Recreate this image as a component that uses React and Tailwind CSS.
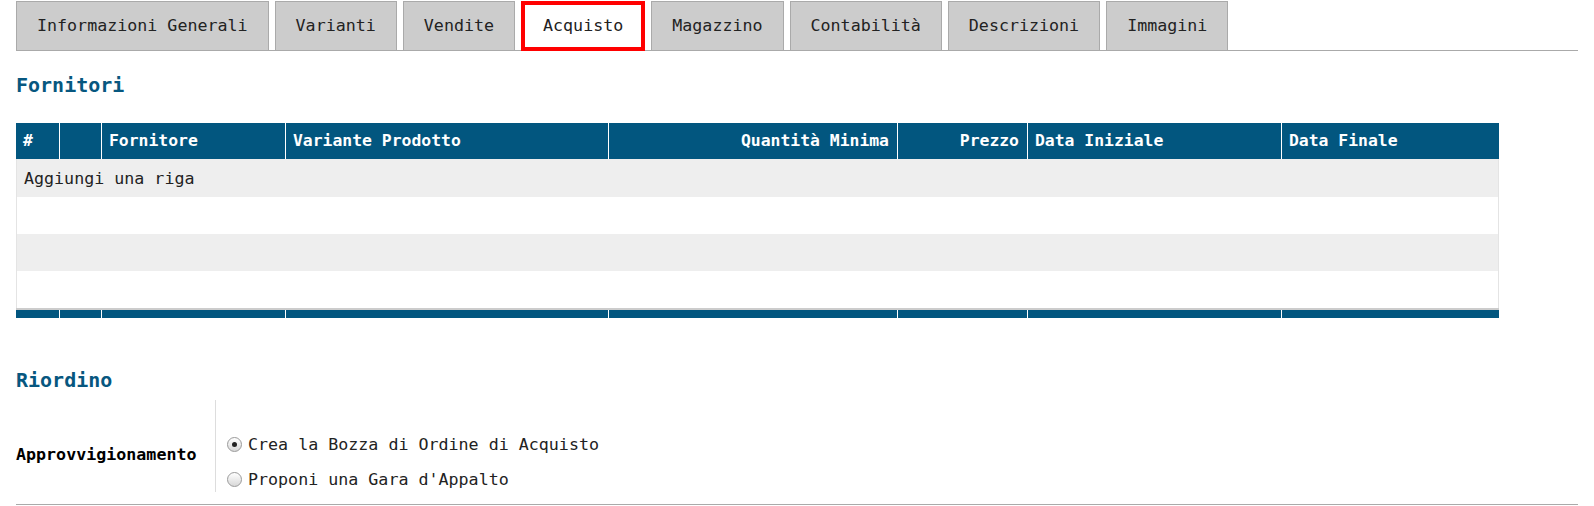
import React from 'react';

const tabs = [
  { label: 'Informazioni Generali' },
  { label: 'Varianti' },
  { label: 'Vendite' },
  { label: 'Acquisto', active: true },
  { label: 'Magazzino' },
  { label: 'Contabilità' },
  { label: 'Descrizioni' },
  { label: 'Immagini' },
];

const columns = [
  { label: '#', w: 'w-[43px]' },
  { label: '', w: 'w-[42px]' },
  { label: 'Fornitore', w: 'w-[184px]' },
  { label: 'Variante Prodotto', w: 'w-[323px]' },
  { label: 'Quantità Minima', w: 'w-[289px]', right: true },
  { label: 'Prezzo', w: 'w-[130px]', right: true },
  { label: 'Data Iniziale', w: 'w-[254px]' },
  { label: 'Data Finale', w: 'w-[218px]' },
];

const Radio = ({ checked, label }) => (
  <label className="flex h-[35px] items-center gap-[6px]">
    <span className="flex h-[15px] w-[15px] items-center justify-center rounded-full border border-[#9a9a9a] bg-gradient-to-b from-white to-[#d8d8d8]">
      {checked && <span className="h-[5px] w-[5px] rounded-full bg-[#222]" />}
    </span>
    <span>{label}</span>
  </label>
);

const App = () => {
  return (
    <div className="min-h-[506px] w-[1594px] bg-white px-[16px] font-['DejaVu_Sans_Mono',monospace] text-[16.67px] text-[#222]">
      {/* Tabs */}
      <div className="flex items-end gap-[6px] border-b border-[#aaa] pt-px">
        {tabs.map((tab) =>
          tab.active ? (
            <div
              key={tab.label}
              className="relative z-10 -mb-px flex h-[50px] items-center border-4 border-[#f00] bg-white px-[18px] leading-none"
            >
              {tab.label}
            </div>
          ) : (
            <div
              key={tab.label}
              className="flex h-[49px] items-center border border-b-0 border-[#aaa] bg-[#ccc] px-[20px] leading-none"
            >
              {tab.label}
            </div>
          )
        )}
      </div>

      {/* Fornitori */}
      <h2 className="mt-[22px] text-[20px] font-bold leading-[24px] text-[#07577f]">Fornitori</h2>

      <div className="mt-[26px] w-[1483px]">
        <div className="flex h-[36px] bg-[#02567f] text-[16.4px] font-bold text-white">
          {columns.map((col, i) => (
            <div
              key={i}
              className={`${col.w} flex items-center pl-[7px] pr-[8px] ${i > 0 ? 'border-l border-white' : ''} ${
                col.right ? 'justify-end' : ''
              }`}
            >
              {col.label}
            </div>
          ))}
        </div>
        <div className="border-x border-[#e4e4e4]">
          <div className="flex h-[38px] items-center bg-[#eee] px-[7px]">Aggiungi una riga</div>
          <div className="h-[37px] bg-white" />
          <div className="h-[37px] bg-[#eee]" />
          <div className="h-[37px] bg-white" />
        </div>
        <div className="flex h-[10px] border-t-2 border-[#ccc] bg-[#02567f]">
          {columns.map((col, i) => (
            <div key={i} className={`${col.w} ${i > 0 ? 'border-l border-white' : ''}`} />
          ))}
        </div>
      </div>

      {/* Riordino */}
      <h2 className="mt-[50px] text-[20px] font-bold leading-[24px] text-[#07577f]">Riordino</h2>

      <div className="mt-[8px] flex items-start">
        <div className="flex h-[92px] w-[200px] items-center border-r border-[#ddd] pt-[16px] font-bold text-black">
          Approvvigionamento
        </div>
        <div className="pl-[11px] pt-[27px]">
          <Radio checked label="Crea la Bozza di Ordine di Acquisto" />
          <Radio label="Proponi una Gara d'Appalto" />
        </div>
      </div>
      <div className="mt-[7px] h-px bg-[#aaa]" />
    </div>
  );
};

export default App;
